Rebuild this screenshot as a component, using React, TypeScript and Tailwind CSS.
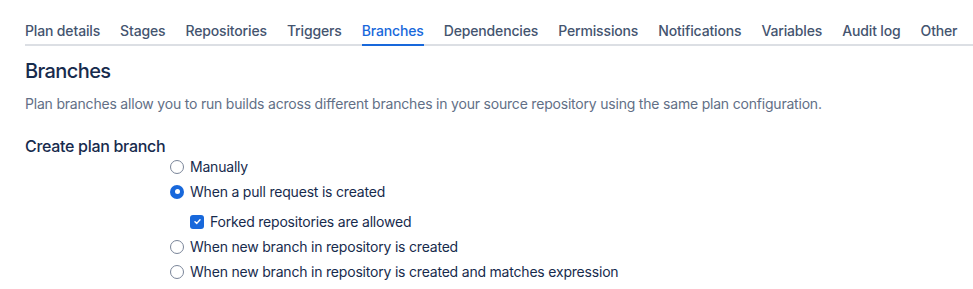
const tabs = [
  "Plan details",
  "Stages",
  "Repositories",
  "Triggers",
  "Branches",
  "Dependencies",
  "Permissions",
  "Notifications",
  "Variables",
  "Audit log",
  "Other",
];

function Radio({ checked, label }: { checked?: boolean; label: string }) {
  return (
    <label className="flex h-[25px] items-center gap-[6px]">
      {checked ? (
        <span className="flex h-[14px] w-[14px] flex-none items-center justify-center rounded-full bg-[#1868DB]">
          <span className="h-[5px] w-[5px] rounded-full bg-white" />
        </span>
      ) : (
        <span className="h-[14px] w-[14px] flex-none rounded-full border-[1.5px] border-[#7A8599] bg-white" />
      )}
      <span className="whitespace-nowrap text-[14px] tracking-[-0.2px] text-[#172B4D]">{label}</span>
    </label>
  );
}

export default function App() {
  return (
    <div
      className="min-h-[289px] w-[973px] overflow-hidden bg-white pl-[25px]"
      style={{ fontFamily: "Inter, 'Noto Sans', sans-serif" }}
    >
      <nav className="flex gap-[20px] border-b-2 border-[#DCDFE4] pt-[21px]">
        {tabs.map((t) => (
          <div
            key={t}
            className={
              t === "Branches"
                ? "-mb-[2px] flex-none whitespace-nowrap border-b-2 border-[#1868DB] pb-[3px] text-[14px] font-medium leading-5 tracking-[-0.15px] text-[#1868DB]"
                : "flex-none whitespace-nowrap pb-[3px] text-[14px] font-medium leading-5 tracking-[-0.15px] text-[#44546F]"
            }
          >
            {t}
          </div>
        ))}
      </nav>

      <h1 className="mt-[13px] text-[20px] font-medium leading-6 tracking-[-0.6px] text-[#172B4D]">Branches</h1>
      <p className="mt-[11px] whitespace-nowrap text-[14px] leading-5 tracking-[-0.2px] text-[#626F86]">
        Plan branches allow you to run builds across different branches in your source repository using the
        same plan configuration.
      </p>

      <h2 className="mt-[22px] text-[16px] font-medium leading-5 tracking-[-0.3px] text-[#172B4D]">Create plan branch</h2>

      <div className="-mt-[2px] ml-[145px] flex flex-col">
        <Radio label="Manually" />
        <Radio checked label="When a pull request is created" />
        <label className="ml-[20px] mt-[5px] flex h-[25px] items-center gap-[6px]">
          <span className="flex h-[14px] w-[14px] flex-none items-center justify-center rounded-[3px] bg-[#1868DB]">
            <svg width="9" height="9" viewBox="0 0 10 10" fill="none">
              <path d="M2.2 5.2 4.2 7.1 7.8 3" stroke="white" strokeWidth="1.6" strokeLinecap="round" strokeLinejoin="round" />
            </svg>
          </span>
          <span className="whitespace-nowrap text-[14px] tracking-[-0.2px] text-[#172B4D]">Forked repositories are allowed</span>
        </label>
        <Radio label="When new branch in repository is created" />
        <Radio label="When new branch in repository is created and matches expression" />
      </div>
    </div>
  );
}
